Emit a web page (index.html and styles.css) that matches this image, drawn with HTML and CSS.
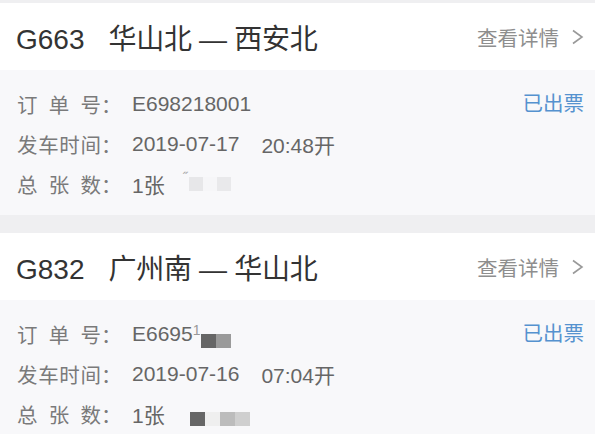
FILE: index.html
```html
<!DOCTYPE html>
<html lang="zh-CN">
<head>
<meta charset="utf-8">
<title>订单</title>
<link rel="stylesheet" href="styles.css">
</head>
<body>
<div class="list">
  <section class="card">
    <header class="card-head">
      <h2 class="route"><span class="train">G663</span>华山北 — 西安北</h2>
      <a class="detail">查看详情<svg class="chev" width="14" height="16" viewBox="0 0 14 16"><path d="M2 1.5 L11 8 L2 14.5" fill="none" stroke="#999" stroke-width="1.6"/></svg></a>
    </header>
    <div class="card-body">
      <div class="status">已出票</div>
      <div class="row"><span class="label"><span class="lt">订单号</span>：</span><span class="val">E698218001</span></div>
      <div class="row"><span class="label"><span class="lt">发车时间</span>：</span><span class="val">2019-07-17</span><span class="val time">20:48开</span></div>
      <div class="row"><span class="label"><span class="lt">总张数</span>：</span><span class="val">1张</span><span class="tick">˝</span><span class="blk lite1"></span><span class="blk gap"></span><span class="blk lite2"></span></div>
    </div>
  </section>
  <section class="card">
    <header class="card-head">
      <h2 class="route"><span class="train">G832</span>广州南 — 华山北</h2>
      <a class="detail">查看详情<svg class="chev" width="14" height="16" viewBox="0 0 14 16"><path d="M2 1.5 L11 8 L2 14.5" fill="none" stroke="#999" stroke-width="1.6"/></svg></a>
    </header>
    <div class="card-body">
      <div class="status">已出票</div>
      <div class="row"><span class="label"><span class="lt">订单号</span>：</span><span class="val">E6695<span class="part">1</span></span><span class="mask low"><span class="blk dark"></span><span class="blk mid"></span></span></div>
      <div class="row"><span class="label"><span class="lt">发车时间</span>：</span><span class="val">2019-07-16</span><span class="val time">07:04开</span></div>
      <div class="row"><span class="label"><span class="lt">总张数</span>：</span><span class="val">1张</span><span class="mask low2"><span class="blk dark"></span><span class="blk pale"></span><span class="blk grey1"></span><span class="blk grey2"></span></span></div>
    </div>
  </section>
</div>
</body>
</html>
```

FILE: styles.css
```css
* { box-sizing: border-box; margin: 0; padding: 0; }
html, body { width: 595px; height: 434px; overflow: hidden; }
body {
  background: #efeff1;
  font-family: "Liberation Sans", "Noto Sans CJK SC", sans-serif;
  color: #333;
}
.list {
  display: flex;
  flex-direction: column;
  gap: 18px;
  padding-top: 3px;
}
.card { background: #f8f8fa; }
.card-head {
  height: 67px;
  background: #fff;
  display: flex;
  align-items: center;
  justify-content: space-between;
  padding: 0 10px 0 16px;
}
.route {
  font-size: 28px;
  font-weight: normal;
  color: #333;
  letter-spacing: -0.3px;
}
.train { margin-right: 24px; letter-spacing: 0; }
.detail {
  display: flex;
  align-items: center;
  font-size: 20.5px;
  color: #8e8e8e;
}
.chev { margin-left: 12px; }
.card-body {
  position: relative;
  padding: 14px 11px 11px 17px;
}
.status {
  position: absolute;
  right: 11px;
  top: 19px;
  font-size: 20.5px;
  line-height: 30px;
  color: #5592cf;
}
.row {
  display: flex;
  align-items: center;
  height: 40px;
  font-size: 20.5px;
  color: #6f6f6f;
}
.label {
  display: flex;
  width: 115px;
  flex: none;
  color: #7a7a7a;
}
.lt {
  width: 84px;
  text-align: justify;
  text-align-last: justify;
}
.val { color: #666; font-size: 21px; }
.time { margin-left: 22px; }
.tick { font-size: 14px; color: #aaa; margin: -12px 0 0 18px; }
.blk { display: inline-block; height: 14px; width: 14px; }
.lite1 { background: #e7e7e9; margin-left: 2px; }
.gap { background: #f6f6f8; }
.lite2 { background: #e9e9eb; }
.part { color: #999; font-size: 14px; vertical-align: 6px; }
.mask { display: flex; }
.low { margin: 14px 0 0 0; }
.low2 { margin: 10px 0 0 25px; }
.dark { background: #666; width: 15px; }
.mid { background: #9a9a9a; width: 15px; }
.pale { background: #efefef; width: 15px; }
.grey1 { background: #bcbcbc; width: 15px; }
.grey2 { background: #cfcfcf; width: 15px; }
```
